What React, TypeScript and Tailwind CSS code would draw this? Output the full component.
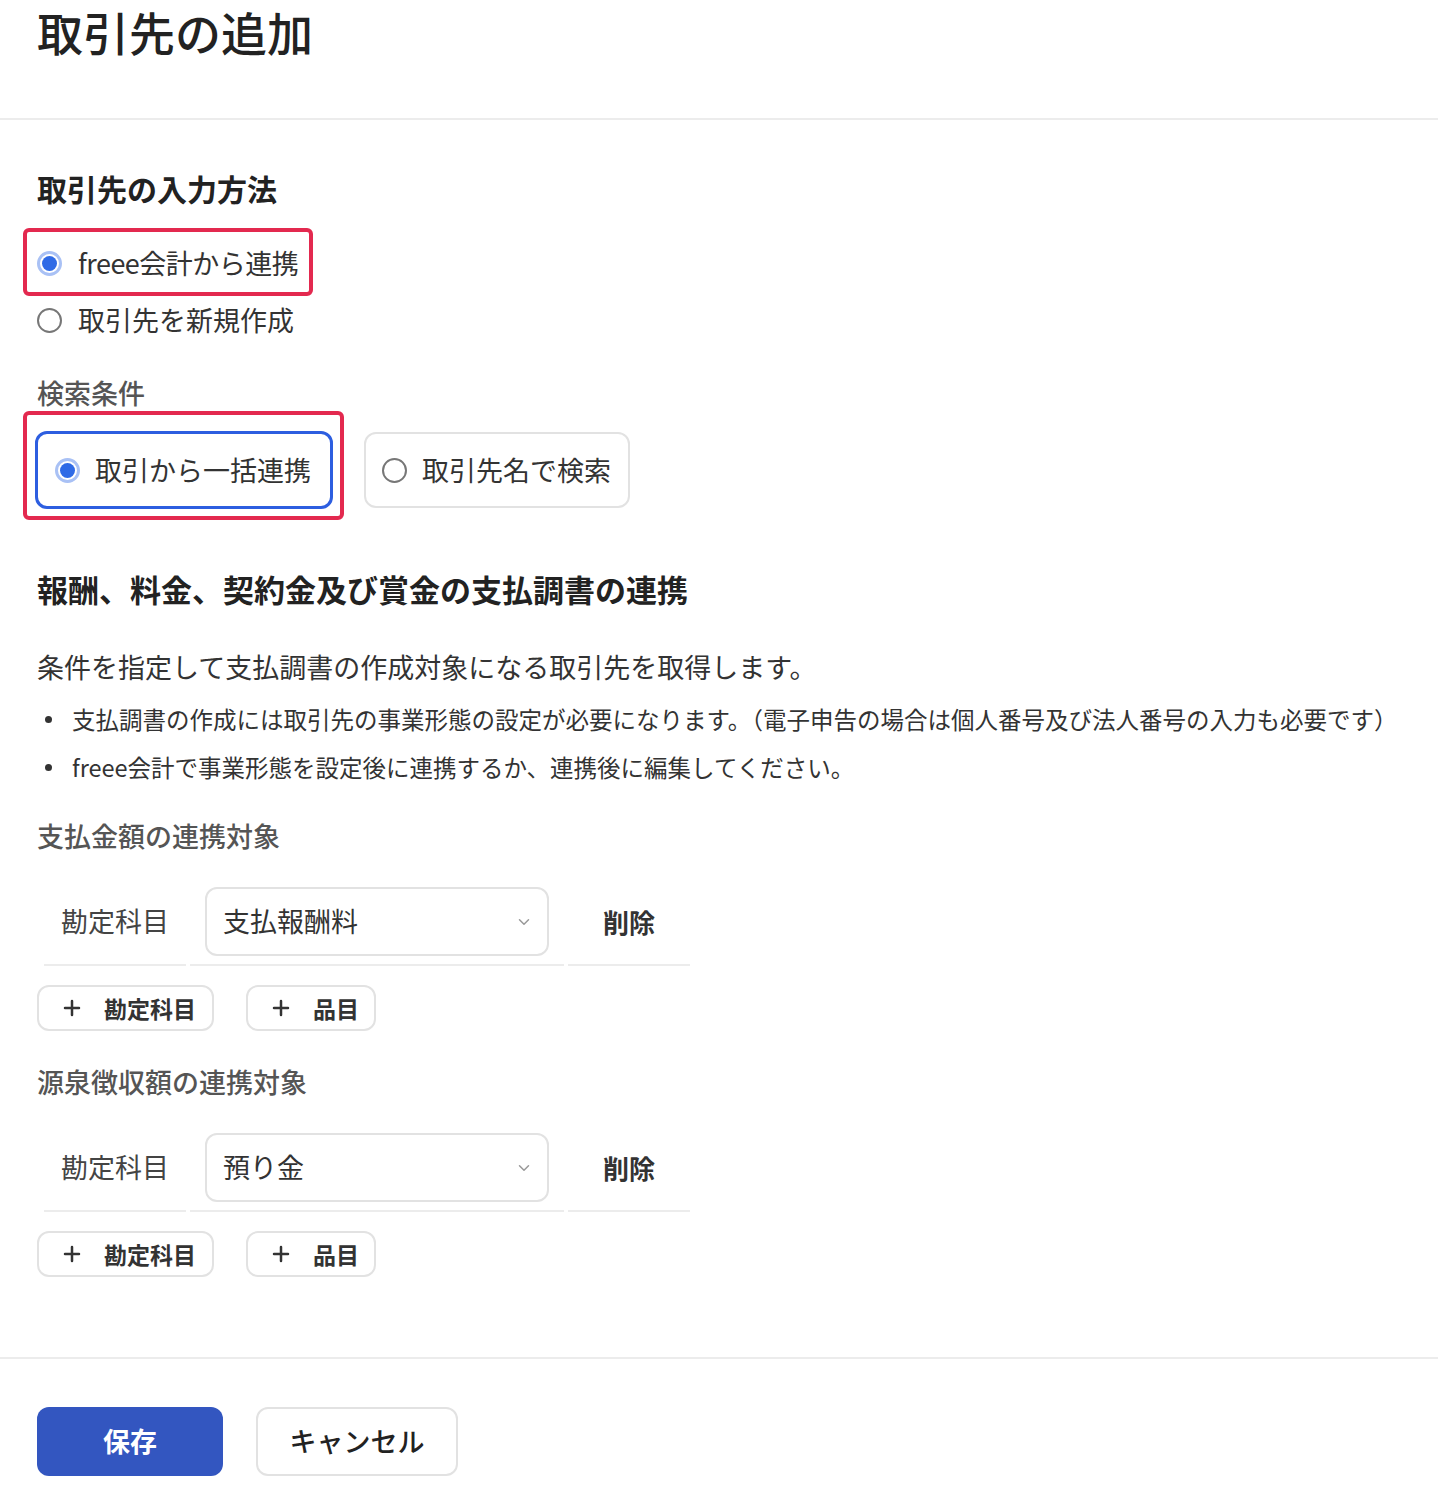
import { ChevronDown, Plus } from "lucide-react";

const font = {
  fontFamily: '"Noto Sans CJK JP", "Noto Sans", sans-serif',
};

const Radio = ({ checked }: { checked?: boolean }) =>
  checked ? (
    <span className="flex h-[25px] w-[25px] shrink-0 items-center justify-center rounded-full border-[3px] border-[#a9c1f5] bg-white">
      <span className="h-[15px] w-[15px] rounded-full bg-[#2f6ae6]" />
    </span>
  ) : (
    <span className="h-[25px] w-[25px] shrink-0 rounded-full border-2 border-[#777] bg-white" />
  );

const AccountRow = ({ value }: { value: string }) => (
  <div className="ml-[7px] flex gap-1">
    <div className="flex w-[142px] items-center justify-center border-b-2 border-[#ececec] py-2 text-[27px] text-[#444]">
      勘定科目
    </div>
    <div className="w-[374px] border-b-2 border-[#ececec] px-[15px] py-2">
      <div className="flex h-[69px] items-center justify-between rounded-xl border-2 border-[#e2e2e2] pl-4 pr-[14px] text-[27px] text-[#333]">
        <span>{value}</span>
        <ChevronDown size={18} strokeWidth={2} className="text-[#999]" />
      </div>
    </div>
    <div className="flex w-[122px] items-center justify-center border-b-2 border-[#ececec] py-2 text-[26px] font-bold text-[#333]">
      削除
    </div>
  </div>
);

const AddButtons = () => (
  <div className="mt-[19px] flex gap-8">
    <button className="flex h-[46px] w-[177px] items-center gap-[20px] rounded-xl border-2 border-[#e2e2e2] pl-[21px] text-[23px] font-bold text-[#333]">
      <Plus size={24} strokeWidth={2.5} />
      勘定科目
    </button>
    <button className="flex h-[46px] w-[130px] items-center gap-[20px] rounded-xl border-2 border-[#e2e2e2] pl-[21px] text-[23px] font-bold text-[#333]">
      <Plus size={24} strokeWidth={2.5} />
      品目
    </button>
  </div>
);

export default function App() {
  return (
    <div className="min-h-[1496px] bg-white" style={font}>
      <header className="h-[120px] border-b-2 border-[#ececec] pl-[37px]">
        <h1 className="text-[46px] font-medium leading-[62px] text-[#222]">取引先の追加</h1>
      </header>

      <main className="px-[37px] pb-[80px]">
        <h2 className="mt-[48px] text-[30px] font-bold leading-[40px] text-[#222]">取引先の入力方法</h2>

        <div className="mt-[27px]">
          <div className="relative flex h-[57px] items-center gap-[16px] text-[27px] text-[#333]">
            <Radio checked />
            <span className="tracking-[-0.5px]">freee会計から連携</span>
            <div className="pointer-events-none absolute left-[-14px] top-[-7px] h-[68px] w-[290px] rounded-md border-4 border-[#e3294f]" />
          </div>
          <div className="flex h-[57px] items-center gap-[16px] text-[27px] text-[#333]">
            <Radio />
            <span>取引先を新規作成</span>
          </div>
        </div>

        <div className="mt-[26px] text-[27px] font-medium leading-[36px] text-[#555]">検索条件</div>

        <div className="-ml-[2px] mt-[20px] flex gap-[31px]">
          <div className="relative">
            <div className="flex h-[78px] w-[298px] items-center gap-[15px] rounded-xl border-[3px] border-[#2d5ee0] pl-[17px] text-[27px] text-[#333]">
              <Radio checked />
              <span>取引から一括連携</span>
            </div>
            <div className="pointer-events-none absolute left-[-12px] top-[-20px] h-[109px] w-[321px] rounded-md border-4 border-[#e3294f]" />
          </div>
          <div className="flex h-[76px] w-[266px] items-center gap-[15px] self-center rounded-xl border-2 border-[#e2e2e2] pl-[16px] text-[27px] text-[#333]">
            <Radio />
            <span>取引先名で検索</span>
          </div>
        </div>

        <h2 className="mt-[60px] text-[31px] font-bold leading-[40px] text-[#222]">
          報酬、料金、契約金及び賞金の支払調書の連携
        </h2>

        <p className="mt-[39px] text-[27px] leading-[38px] text-[#333]">
          条件を指定して支払調書の作成対象になる取引先を取得します。
        </p>

        <ul className="mt-[9px] text-[23.5px] leading-[48px] text-[#333]">
          <li className="flex items-center">
            <span className="ml-[8px] mr-[20px] h-[7px] w-[7px] rounded-full bg-[#333]" />
            支払調書の作成には取引先の事業形態の設定が必要になります。（電子申告の場合は個人番号及び法人番号の入力も必要です）
          </li>
          <li className="flex items-center">
            <span className="ml-[8px] mr-[20px] h-[7px] w-[7px] rounded-full bg-[#333]" />
            freee会計で事業形態を設定後に連携するか、連携後に編集してください。
          </li>
        </ul>

        <div className="mt-[26px] text-[27px] font-medium leading-[38px] text-[#555]">支払金額の連携対象</div>
        <div className="mt-[24px]">
          <AccountRow value="支払報酬料" />
        </div>
        <AddButtons />

        <div className="mt-[32px] text-[27px] font-medium leading-[38px] text-[#555]">源泉徴収額の連携対象</div>
        <div className="mt-[24px]">
          <AccountRow value="預り金" />
        </div>
        <AddButtons />
      </main>

      <footer className="border-t-2 border-[#ececec] px-[37px] pt-[48px]">
        <div className="flex gap-[33px]">
          <button className="h-[69px] w-[186px] rounded-xl bg-[#3356c0] text-[27px] font-bold text-white">
            保存
          </button>
          <button className="h-[69px] w-[202px] rounded-xl border-2 border-[#e2e2e2] text-[27px] font-medium text-[#222]">
            キャンセル
          </button>
        </div>
      </footer>
    </div>
  );
}
